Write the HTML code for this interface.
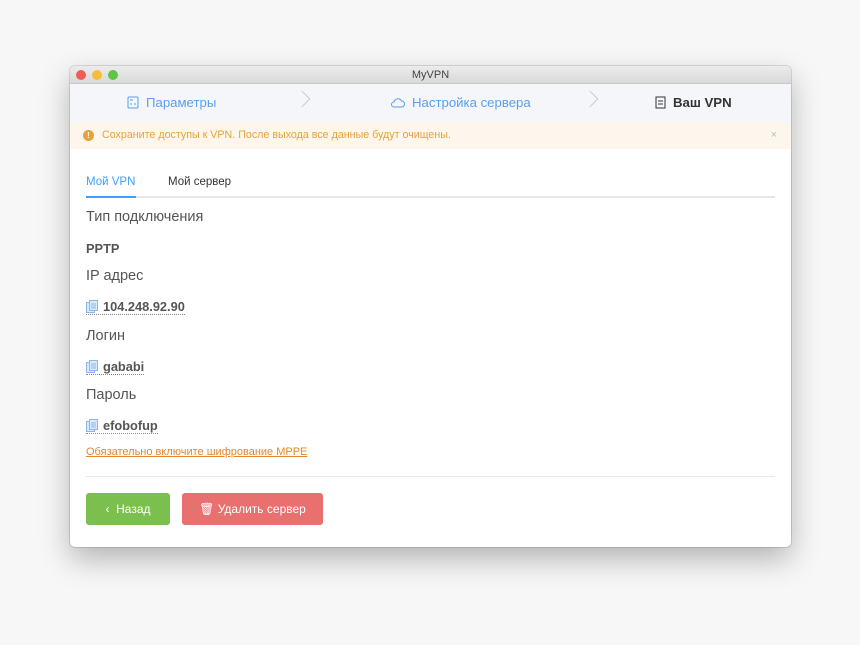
<!DOCTYPE html>
<html><head><meta charset="utf-8"><style>
*{box-sizing:border-box;margin:0;padding:0}
body{width:860px;height:645px;background:#f7f7f7;font-family:"Liberation Sans",sans-serif;position:relative;overflow:hidden}
.win{position:absolute;left:70px;top:66px;width:721px;height:481px;background:#fff;border-radius:5px;box-shadow:0 12px 30px rgba(0,0,0,.28),0 0 0 1px rgba(0,0,0,.12);overflow:hidden}
.tb{height:18px;background:linear-gradient(#ececec,#d9d9d9);border-bottom:1px solid #c8c8c8;text-align:center;font-size:11px;color:#444;line-height:18px;position:relative}
.dot{position:absolute;top:4px;width:10px;height:10px;border-radius:50%}
.steps{height:38px;background:#f4f6fa;position:relative;font-size:13.2px}
.st{position:absolute;top:11px;display:flex;align-items:center;gap:7px}
.arr{position:absolute;top:9px;width:12px;height:12px;border-right:1px solid #ccc;border-top:1px solid #ccc;transform:rotate(45deg)}
.alert{height:27px;background:#fdf6ec;color:#e6a23c;font-size:10.7px;line-height:27px;padding-left:32px;position:relative}
.alert .ic{position:absolute;left:13px;top:8px;width:11px;height:11px;border-radius:50%;background:#e6a23c;color:#fff;font-size:8px;line-height:11px;text-align:center;font-weight:bold}
.tabs{position:absolute;left:16px;top:112px;width:689px;height:20px;border-bottom:2px solid #e4e7ed;font-size:11.5px}
.tab{position:absolute;top:-2px}
.lbl{position:absolute;left:16px;font-size:14.5px;color:#555}
.val{position:absolute;left:16px;font-size:12.8px;color:#555;font-weight:bold}
.val.u{border-bottom:1px dotted #888;padding-left:17px}
.cp{position:absolute;left:0;top:1px}
.btn{position:absolute;top:427px;height:32px;border-radius:3px;color:#fff;font-size:12px;line-height:32px;text-align:center}
</style></head><body>
<div class="win">
<div class="tb"><span class="dot" style="left:6px;background:#ee5e57"></span><span class="dot" style="left:22px;background:#f5bd3a"></span><span class="dot" style="left:38px;background:#5fc547"></span>MyVPN</div>
<div class="steps">
<div class="st" style="left:57px;color:#5a9ef0"><svg width="12" height="13"><rect x="1" y="1" width="10" height="11" rx="1" fill="none" stroke="#5a9ef0"/><path d="M3 4h3M3 8h2M7 8h2" stroke="#5a9ef0"/></svg>Параметры</div>
<div class="arr" style="left:226px"></div>
<div class="st" style="left:321px;color:#5a9ef0"><svg width="14" height="11"><path d="M3 10a2.5 2.5 0 0 1 0-5a4 4 0 0 1 7.5-1a3 3 0 0 1 0 6z" fill="none" stroke="#5a9ef0"/></svg>Настройка сервера</div>
<div class="arr" style="left:514px"></div>
<div class="st" style="left:585px;color:#333;font-weight:bold"><svg width="11" height="13"><rect x="1" y="1" width="9" height="11" fill="none" stroke="#333"/><path d="M3 5h5M3 8h5" stroke="#333"/></svg>Ваш VPN</div>
</div>
<div class="alert"><span class="ic">!</span>Сохраните доступы к VPN. После выхода все данные будут очищены.<span style="position:absolute;right:14px;color:#bbb">×</span></div>
<div class="tabs"><span class="tab" style="left:0;color:#409eff">Мой VPN</span><span class="tab" style="left:82px;color:#333">Мой сервер</span><div style="position:absolute;left:0;bottom:-2px;width:50px;height:2px;background:#409eff"></div></div>
<div class="lbl" style="top:143px">Тип подключения</div>
<div class="val" style="top:175px">PPTP</div>
<div class="lbl" style="top:202px">IP адрес</div>
<div class="val u" style="top:233px"><svg class="cp" width="12" height="13"><rect x="0.5" y="2.5" width="8" height="10" fill="#dbeafb" stroke="#8ab8ee"/><rect x="3.5" y="0.5" width="8" height="10" fill="#dbeafb" stroke="#8ab8ee"/><path d="M5 4h5M5 6h5M5 8h5" stroke="#8ab8ee"/></svg>104.248.92.90</div>
<div class="lbl" style="top:262px">Логин</div>
<div class="val u" style="top:293px"><svg class="cp" width="12" height="13"><rect x="0.5" y="2.5" width="8" height="10" fill="#dbeafb" stroke="#8ab8ee"/><rect x="3.5" y="0.5" width="8" height="10" fill="#dbeafb" stroke="#8ab8ee"/><path d="M5 4h5M5 6h5M5 8h5" stroke="#8ab8ee"/></svg>gababi</div>
<div class="lbl" style="top:321px">Пароль</div>
<div class="val u" style="top:352px"><svg class="cp" width="12" height="13"><rect x="0.5" y="2.5" width="8" height="10" fill="#dbeafb" stroke="#8ab8ee"/><rect x="3.5" y="0.5" width="8" height="10" fill="#dbeafb" stroke="#8ab8ee"/><path d="M5 4h5M5 6h5M5 8h5" stroke="#8ab8ee"/></svg>efobofup</div>
<div style="position:absolute;left:16px;top:380px;font-size:11px;color:#e6862c;text-decoration:underline">Обязательно включите шифрование MPPE</div>
<div style="position:absolute;left:16px;top:410px;width:689px;height:1px;background:#e8e8e8"></div>
<div class="btn" style="left:16px;width:84px;background:#7bbf4e">‹&nbsp; Назад</div>
<div class="btn" style="left:112px;width:141px;background:#e8706e">🗑 Удалить сервер</div>
</div>
</body></html>
